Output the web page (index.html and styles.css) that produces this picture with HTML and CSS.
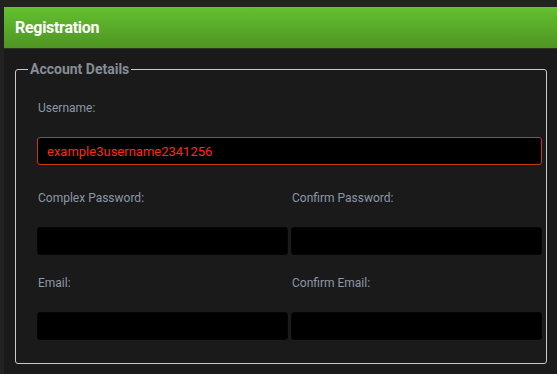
FILE: index.html
```html
<!DOCTYPE html>
<html lang="en">
<head>
<meta charset="utf-8">
<title>Registration</title>
<link rel="stylesheet" href="styles.css">
</head>
<body>
<div class="panel">
  <div class="panel-header">Registration</div>
  <div class="panel-body">
    <fieldset class="group">
      <legend class="group-title">Account Details</legend>
      <div class="form">
        <div class="row row-single row-first">
          <div class="field">
            <label class="field-label" for="username">Username:</label>
            <input class="field-input field-input-error" id="username" type="text" value="example3username2341256">
          </div>
        </div>
        <div class="row row-double">
          <div class="field">
            <label class="field-label" for="pw">Complex Password:</label>
            <input class="field-input" id="pw" type="password">
          </div>
          <div class="field">
            <label class="field-label" for="pw2">Confirm Password:</label>
            <input class="field-input" id="pw2" type="password">
          </div>
        </div>
        <div class="row row-double">
          <div class="field">
            <label class="field-label" for="em">Email:</label>
            <input class="field-input" id="em" type="text">
          </div>
          <div class="field">
            <label class="field-label" for="em2">Confirm Email:</label>
            <input class="field-input" id="em2" type="text">
          </div>
        </div>
      </div>
    </fieldset>
  </div>
</div>
</body>
</html>
```

FILE: styles.css
```css
html, body {
  margin: 0;
  padding: 0;
  overflow: hidden;
}
body {
  background: #222222;
  font-family: Roboto, "Liberation Sans", Arial, sans-serif;
  padding: 7px 0 0 4px;
}
.panel {
  width: 560px;
  background: #1a1a1a;
  min-height: 380px;
}
.panel-header {
  height: 42px;
  box-sizing: border-box;
  padding-left: 11px;
  background: linear-gradient(to bottom, #64c12f 0%, #4f9423 100%);
  border-bottom: 1px solid #26361b;
  color: #ffffff;
  font-weight: bold;
  font-size: 16px;
  line-height: 41px;
  letter-spacing: -0.3px;
}
.panel-body {
  padding: 12px 10px 0 11px;
}
.group {
  margin: 0;
  width: 532px;
  box-sizing: border-box;
  border: 1px solid #c9c9c9;
  border-radius: 3px;
  padding: 0 4px 23px 12px;
}
.group-title {
  padding: 0 2px;
  color: #868d95;
  font-weight: bold;
  font-size: 14px;
  line-height: 16px;
}
.form {
  padding: 24px 0 0 9px;
  display: flex;
  flex-direction: column;
  gap: 21px;
}
.row-first {
  margin-bottom: 5px;
}
.row-double {
  display: grid;
  grid-template-columns: 1fr 1fr;
  column-gap: 3px;
}
.field {
  display: flex;
  flex-direction: column;
}
.field-label {
  display: block;
  height: 15px;
  line-height: 15px;
  font-size: 12px;
  color: #8a98a8;
  padding-left: 1px;
  margin-bottom: 21px;
}
.field-input {
  display: block;
  box-sizing: border-box;
  width: 100%;
  height: 28px;
  margin: 0;
  padding: 0 9px;
  background: #000000;
  border: 1px solid #050505;
  border-radius: 3px;
  font-family: Roboto, "Liberation Sans", Arial, sans-serif;
  font-size: 13px;
  color: #ff2a0a;
  outline: none;
}
.field-input-error {
  border-color: #c63a12;
}
```
